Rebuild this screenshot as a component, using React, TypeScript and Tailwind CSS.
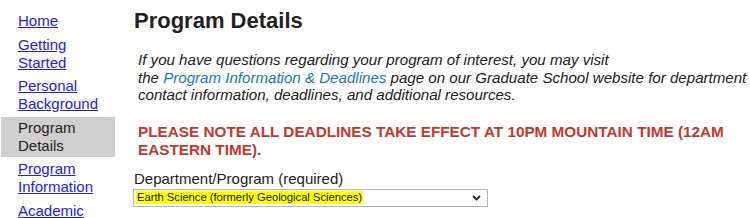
const navItems = [
  { label: ['Home'], active: false },
  { label: ['Getting', 'Started'], active: false },
  { label: ['Personal', 'Background'], active: false },
  { label: ['Program', 'Details'], active: true },
  { label: ['Program', 'Information'], active: false },
  { label: ['Academic', 'History'], active: false },
];

export default function App() {
  return (
    <div className="flex h-[218px] overflow-hidden bg-white font-['Liberation_Sans',Arial,sans-serif] text-[#222]">
      {/* side nav */}
      <nav className="ml-[1px] w-[114px] shrink-0 pt-[10px]">
        <ul className="flex flex-col gap-[1.5px]">
          {navItems.map((item, i) => (
            <li
              key={i}
              className={
                item.active
                  ? 'bg-[#cfcfcf] py-[2px] pl-[17px] text-[15px] leading-[18px] text-[#222]'
                  : 'py-[2px] pl-[17px] text-[15px] leading-[18px]'
              }
            >
              {item.active ? (
                item.label.map((l) => <div key={l}>{l}</div>)
              ) : (
                <a href="#" className="text-[#2020ff] underline">
                  {item.label.map((l, j) => (
                    <span key={l}>
                      {l}
                      {j < item.label.length - 1 && <br />}
                    </span>
                  ))}
                </a>
              )}
            </li>
          ))}
        </ul>
      </nav>

      {/* main */}
      <main className="ml-[19px] flex-1 whitespace-nowrap">
        <h1 className="mt-[8px] text-[22px] font-bold leading-[26px] text-[#222]">Program Details</h1>

        <p className="mt-[17px] pl-[4px] text-[15.1px] italic leading-[17.5px]">
          If you have questions regarding your program of interest, you may visit
          <br />
          the{' '}
          <a href="#" className="text-[#1a75cf]">
            Program Information &amp; Deadlines
          </a>{' '}
          page on our Graduate School website for department
          <br />
          contact information, deadlines, and additional resources.
        </p>

        <p className="mt-[19px] pl-[4px] text-[15.3px] font-bold leading-[18px] text-[#c8372d]">
          PLEASE NOTE ALL DEADLINES TAKE EFFECT AT 10PM MOUNTAIN TIME (12AM
          <br />
          EASTERN TIME).
        </p>

        <div className="mt-[11px] text-[15px] leading-[17px] text-[#222]">Department/Program (required)</div>

        <div className="mt-[2px] ml-[-1px] flex h-[18px] w-[355px] items-center justify-between border border-[#b5b5b5] bg-white pl-[2px] pr-[6px]">
          <span className="bg-[#ffff00] px-[1px] text-[11.2px] leading-[13px] text-[#111]">
            Earth Science (formerly Geological Sciences)
          </span>
          <svg width="9" height="6" viewBox="0 0 9 6" className="text-[#222]">
            <path d="M1 1l3.5 3.5L8 1" fill="none" stroke="currentColor" strokeWidth="1.8" />
          </svg>
        </div>
      </main>
    </div>
  );
}
